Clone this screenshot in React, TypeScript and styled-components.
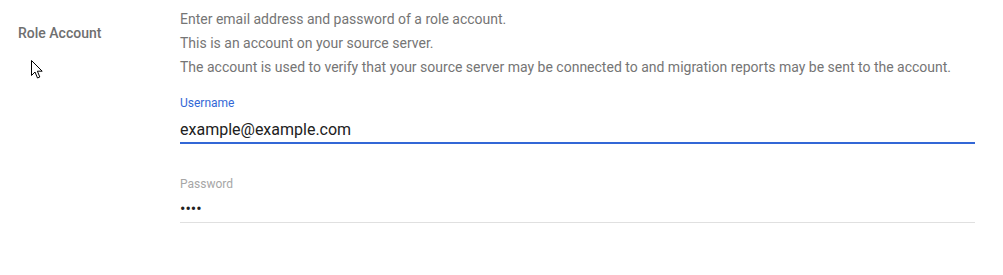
import React from 'react';
import styled, { createGlobalStyle } from 'styled-components';

const GlobalStyle = createGlobalStyle`
    html, body {
        margin: 0;
        padding: 0;
        background: #ffffff;
        font-family: Roboto, "Noto Sans", Arial, sans-serif;
    }
`;

// #region ====== style ===
const Page = styled.div`
    position: relative;
    width: 1003px;
    height: 275px;
    overflow: hidden;
    background: #ffffff;
`;

const Section = styled.div`
    display: flex;
    padding-left: 18px;
`;

const SectionTitle = styled.div`
    width: 162px;
    flex: none;
    padding-top: 23px;
    font-size: 14px;
    line-height: 20px;
    font-weight: 500;
    color: #6f6f6f;
`;

const SectionBody = styled.div`
    width: 795px;
    padding-top: 7px;
`;

const Hint = styled.p`
    margin: 0;
    font-size: 14px;
    line-height: 24px;
    color: #757575;
    white-space: nowrap;
`;

const Field = styled.label<{ $gap: number }>`
    display: flex;
    flex-direction: column;
    margin-top: ${p => p.$gap}px;
`;

const FieldLabel = styled.span<{ $active?: boolean }>`
    font-size: 12px;
    line-height: 16px;
    color: ${p => (p.$active ? '#3367d6' : '#a6a6a6')};
`;

const FieldInput = styled.input<{ $active?: boolean; $pt: number; $pb: number }>`
    display: block;
    width: 100%;
    box-sizing: border-box;
    margin: 0;
    padding: ${p => p.$pt}px 0 ${p => p.$pb}px;
    border: 0;
    border-bottom: ${p => (p.$active ? '2px solid #3367d6' : '1px solid #e0e0e0')};
    outline: none;
    background: transparent;
    font-family: Roboto, "Noto Sans", Arial, sans-serif;
    font-size: 16px;
    line-height: 24px;
    height: ${p => p.$pt + p.$pb + 24 + (p.$active ? 2 : 1)}px;
    color: #212121;
`;

const Cursor = styled.svg`
    position: absolute;
    left: 31px;
    top: 60px;
`;
// #endregion === style ===

export default function App() {
    return (
        <Page>
            <GlobalStyle />
            <Section>
                <SectionTitle>Role Account</SectionTitle>
                <SectionBody>
                    <Hint>Enter email address and password of a role account.</Hint>
                    <Hint>This is an account on your source server.</Hint>
                    <Hint>
                        The account is used to verify that your source server may be connected to and migration
                        reports may be sent to the account.
                    </Hint>
                    <Field $gap={16}>
                        <FieldLabel $active>Username</FieldLabel>
                        <FieldInput $active $pt={6} $pb={1} defaultValue="example@example.com" readOnly />
                    </Field>
                    <Field $gap={32}>
                        <FieldLabel>Password</FieldLabel>
                        <FieldInput type="password" $pt={4} $pb={2} defaultValue="abcd" readOnly />
                    </Field>
                </SectionBody>
            </Section>
            <Cursor width="13" height="20" viewBox="0 0 13 20">
                <path
                    d="M0.5 0.5 L0.5 15.5 L4 12 L6.5 18 L8.8 17 L6.4 11.2 L11.2 11.2 Z"
                    fill="#ffffff"
                    stroke="#000000"
                    strokeWidth="1"
                    strokeLinejoin="miter"
                />
            </Cursor>
        </Page>
    );
}
